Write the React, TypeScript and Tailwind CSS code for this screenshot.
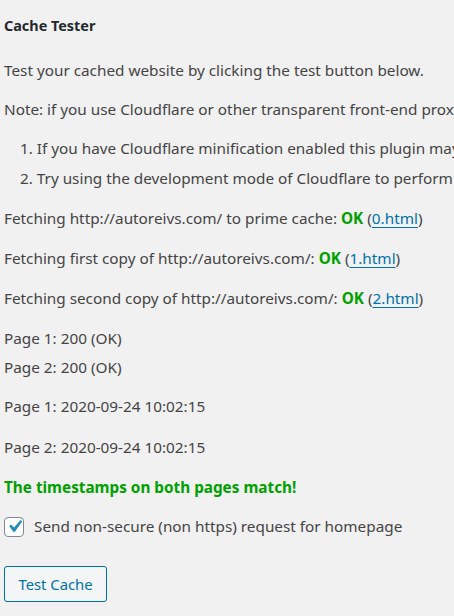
import React from "react";

const font = { fontFamily: '"Noto Sans", "Open Sans", sans-serif' };

function Line({ className = "", children }: { className?: string; children: React.ReactNode }) {
  return <div className={`h-[29px] leading-[29px] whitespace-nowrap ${className}`}>{children}</div>;
}

function Ok() {
  return <span className="font-bold text-[#00a000]">OK</span>;
}

function Link({ children }: { children: React.ReactNode }) {
  return <a className="text-[#0073aa] underline underline-offset-[3px]">{children}</a>;
}

export default function App() {
  return (
    <div
      className="w-[454px] h-[616px] overflow-hidden bg-[#f1f1f1] text-[#444] text-[15.3px] pl-[4px] pt-[11px]"
      style={font}
    >
      <Line className="font-bold text-[#23282d] text-[14.4px]">Cache Tester</Line>
      <Line className="mt-[16px]">Test your cached website by clicking the test button below.</Line>
      <Line className="mt-[10px]">
        Note: if you use Cloudflare or other transparent front-end proxy service your server will not return the same page twice.
      </Line>
      <Line className="mt-[10px] pl-[16px]">
        1. If you have Cloudflare minification enabled this plugin may detect differences in the pages and report an error.
      </Line>
      <Line className="mt-[1px] pl-[16px]">
        2. Try using the development mode of Cloudflare to perform the test. You can disable development mode afterwards.
      </Line>
      <Line className="mt-[11px]">
        Fetching http://autoreivs.com/ to prime cache: <Ok /> (<Link>0.html</Link>)
      </Line>
      <Line className="mt-[11px]">
        Fetching first copy of http://autoreivs.com/: <Ok /> (<Link>1.html</Link>)
      </Line>
      <Line className="mt-[11px]">
        Fetching second copy of http://autoreivs.com/: <Ok /> (<Link>2.html</Link>)
      </Line>
      <Line className="mt-[11px]">Page 1: 200 (OK)</Line>
      <Line>Page 2: 200 (OK)</Line>
      <Line className="mt-[10px]">Page 1: 2020-09-24 10:02:15</Line>
      <Line className="mt-[12px]">Page 2: 2020-09-24 10:02:15</Line>
      <Line className="mt-[11px] font-bold text-[#00a000]">The timestamps on both pages match!</Line>
      <label className="mt-[10px] flex items-center h-[29px] whitespace-nowrap">
        <span className="w-[20px] h-[20px] border border-[#7e8993] rounded-[4px] bg-white flex items-center justify-center shrink-0">
          <svg viewBox="0 0 20 20" className="w-[25px] h-[25px] shrink-0 overflow-visible">
            <path d="M14.83 4.89l1.34.94-5.81 8.38H9.02L5.78 9.67l1.34-1.25 2.57 2.4z" fill="#1e8cbe" />
          </svg>
        </span>
        <span className="ml-[10px]">Send non-secure (non https) request for homepage</span>
      </label>
      <button
        className="mt-[25px] h-[36px] w-[103px] border border-[#0071a1] rounded-[3px] bg-[#f3f5f6] text-[#0071a1] text-[14.8px] block"
        style={font}
      >
        Test Cache
      </button>
    </div>
  );
}
